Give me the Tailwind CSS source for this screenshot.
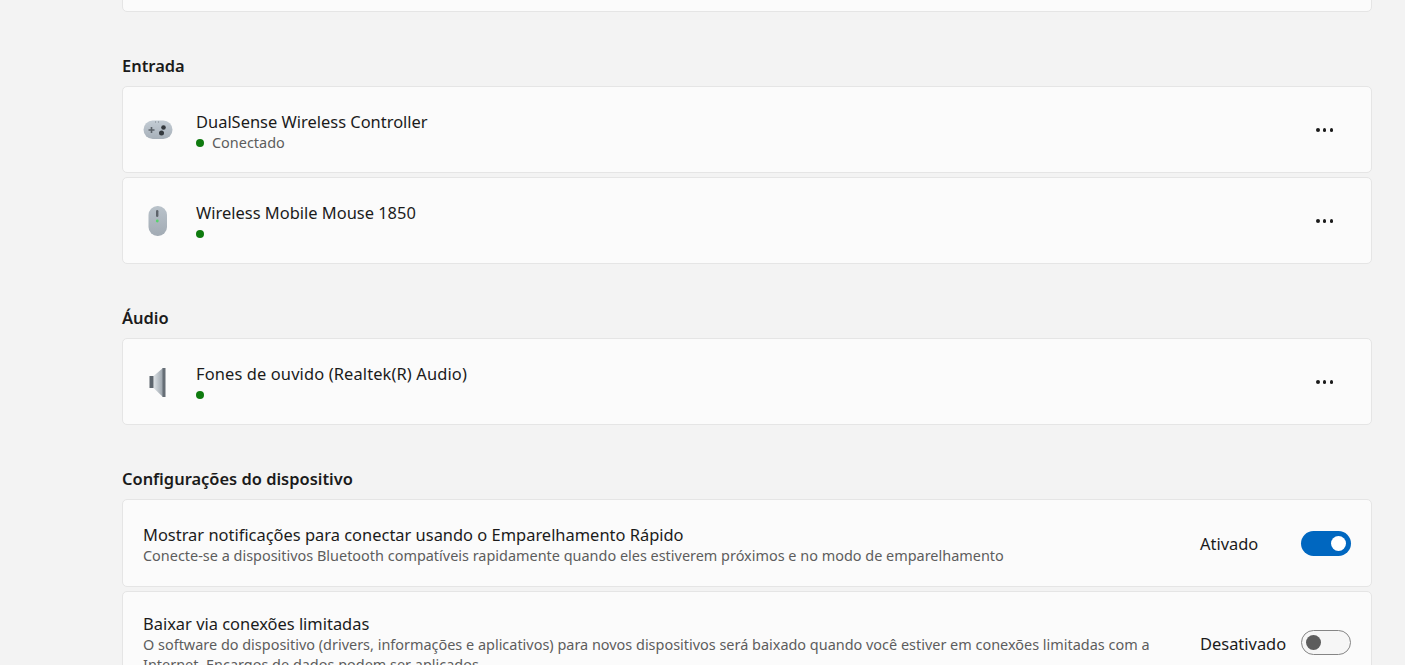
<!DOCTYPE html>
<html lang="en">
<head>
  <meta charset="UTF-8" />
  <title>Bluetooth e dispositivos</title>
  <script src="https://cdn.jsdelivr.net/npm/@tailwindcss/browser@4"></script>
</head>
<body class="bg-[#f3f3f3] h-[665px] overflow-hidden font-['Noto_Sans',sans-serif] text-[#1b1b1b]">
  <main class="w-[1250px] ml-[122px] -mt-[75px]">

    <div class="h-[87px] bg-[#fbfbfb] border border-[#e5e5e5] rounded-[5px]"></div>

    <!-- Entrada -->
    <h2 class="mt-[42px] h-[24px] text-[16.45px] leading-[24px] font-semibold">Entrada</h2>
    <div class="mt-[8px] flex flex-col gap-[4px]">
      <div class="h-[87px] bg-[#fbfbfb] border border-[#e5e5e5] rounded-[5px] flex items-center">
        <div class="w-[69px] flex justify-center">
          <svg width="30" height="20" viewBox="0 0 30 20">
            <defs><linearGradient id="pad" x1="0" y1="0" x2="0" y2="1"><stop offset="0" stop-color="#c3ccd4"/><stop offset="1" stop-color="#a7b0b9"/></linearGradient></defs>
            <rect x="0.5" y="0.5" width="29" height="18.5" rx="9.2" fill="url(#pad)"/>
            <path d="M5.5 10h6M8.5 7v6" stroke="#5b6168" stroke-width="1.6"/>
            <circle cx="20.5" cy="7.5" r="2.3" fill="#33383d"/>
            <circle cx="18.5" cy="13" r="2.5" fill="#33383d"/>
            <path d="M12 2h1M15 2h1" stroke="#7d858c" stroke-width="1"/>
          </svg>
        </div>
        <div class="flex-1 pl-[4px] pt-[4px]">
          <p class="text-[16.45px] leading-[22px]">DualSense Wireless Controller</p>
          <p class="flex items-center text-[14.45px] leading-[20px] text-[#5d5d5d]"><span class="w-[8px] h-[8px] rounded-full bg-[#0f7b0f] mr-[8px]"></span>Conectado</p>
        </div>
        <span class="w-[17px] mr-[38px] mt-[1px] flex justify-between"><i class="w-[3.5px] h-[3.5px] rounded-full bg-[#1b1b1b]"></i><i class="w-[3.5px] h-[3.5px] rounded-full bg-[#1b1b1b]"></i><i class="w-[3.5px] h-[3.5px] rounded-full bg-[#1b1b1b]"></i></span>
      </div>
      <div class="h-[87px] bg-[#fbfbfb] border border-[#e5e5e5] rounded-[5px] flex items-center">
        <div class="w-[69px] flex justify-center">
          <svg width="20" height="30" viewBox="0 0 20 30">
            <defs><linearGradient id="mouse" x1="0" y1="0" x2="0" y2="1"><stop offset="0" stop-color="#b9c2ca"/><stop offset="1" stop-color="#a2abb4"/></linearGradient></defs>
            <rect x="0.5" y="0" width="18.5" height="30" rx="9" fill="url(#mouse)"/>
            <rect x="8" y="4" width="2.4" height="7" rx="1.2" fill="#5d636a"/>
            <circle cx="9.3" cy="15" r="1.4" fill="#55d46a"/>
          </svg>
        </div>
        <div class="flex-1 pl-[4px] pt-[3px]">
          <p class="text-[16.45px] leading-[22px] pt-[1px]">Wireless Mobile Mouse 1850</p>
          <p class="flex items-center h-[19px]"><span class="w-[8px] h-[8px] rounded-full bg-[#0f7b0f]"></span></p>
        </div>
        <span class="w-[17px] mr-[38px] mt-[1px] flex justify-between"><i class="w-[3.5px] h-[3.5px] rounded-full bg-[#1b1b1b]"></i><i class="w-[3.5px] h-[3.5px] rounded-full bg-[#1b1b1b]"></i><i class="w-[3.5px] h-[3.5px] rounded-full bg-[#1b1b1b]"></i></span>
      </div>
    </div>

    <!-- Audio -->
    <h2 class="mt-[42px] h-[24px] text-[16.45px] leading-[24px] font-semibold">Áudio</h2>
    <div class="mt-[8px] h-[87px] bg-[#fbfbfb] border border-[#e5e5e5] rounded-[5px] flex items-center">
      <div class="w-[69px] flex justify-center">
        <svg width="20" height="32" viewBox="0 0 20 32">
          <defs><linearGradient id="spk" x1="0" y1="0" x2="1" y2="0"><stop offset="0" stop-color="#dfe4e8"/><stop offset="1" stop-color="#98a1a9"/></linearGradient></defs>
          <path d="M5.5 10L15 2v29l-9.500-9z" fill="url(#spk)"/>
          <rect x="1.500" y="10" width="4" height="12" fill="#5e666e"/>
          <rect x="14.500" y="2" width="3" height="29" fill="#666e76"/>
        </svg>
      </div>
      <div class="flex-1 pl-[4px] pt-[3px]">
        <p class="text-[16.45px] leading-[22px] pt-[1px] tracking-[0.12px]">Fones de ouvido (Realtek(R) Audio)</p>
        <p class="flex items-center h-[19px]"><span class="w-[8px] h-[8px] rounded-full bg-[#0f7b0f]"></span></p>
      </div>
      <span class="w-[17px] mr-[38px] mt-[1px] flex justify-between"><i class="w-[3.5px] h-[3.5px] rounded-full bg-[#1b1b1b]"></i><i class="w-[3.5px] h-[3.5px] rounded-full bg-[#1b1b1b]"></i><i class="w-[3.5px] h-[3.5px] rounded-full bg-[#1b1b1b]"></i></span>
    </div>

    <!-- Configuracoes -->
    <h2 class="mt-[42px] h-[24px] text-[16.45px] leading-[24px] font-semibold">Configurações do dispositivo</h2>
    <div class="mt-[8px] flex flex-col gap-[4px]">
      <div class="h-[88px] bg-[#fbfbfb] border border-[#e5e5e5] rounded-[5px] flex items-center pl-[20px] pr-[20px]">
        <div class="flex-1 pt-[4px]">
          <p class="text-[16.45px] leading-[22px]">Mostrar notificações para conectar usando o Emparelhamento Rápido</p>
          <p class="text-[14.45px] leading-[20px] text-[#5d5d5d]">Conecte-se a dispositivos Bluetooth compatíveis rapidamente quando eles estiverem próximos e no modo de emparelhamento</p>
        </div>
        <span class="w-[101px] text-[16.45px] pt-[3px]">Ativado</span>
        <span class="w-[50px] h-[25px] rounded-full bg-[#0067c0] flex items-center justify-end pr-[5px]"><i class="w-[15px] h-[15px] rounded-full bg-white"></i></span>
      </div>
      <div class="h-[103px] bg-[#fbfbfb] border border-[#e5e5e5] rounded-[5px] flex items-center pl-[20px] pr-[20px]">
        <div class="w-[1057px] pt-[2px]">
          <p class="text-[16.45px] leading-[22px]">Baixar via conexões limitadas</p>
          <p class="max-w-[1030px] text-[14.45px] leading-[20px] text-[#5d5d5d]">O software do dispositivo (drivers, informações e aplicativos) para novos dispositivos será baixado quando você estiver em conexões limitadas com a Internet. Encargos de dados podem ser aplicados</p>
        </div>
        <span class="w-[101px] text-[16.45px] pt-[3px]">Desativado</span>
        <span class="w-[50px] h-[25px] rounded-full bg-[#f6f6f6] border border-[#858585] flex items-center pl-[4px]"><i class="w-[15px] h-[15px] rounded-full bg-[#5d5d5d]"></i></span>
      </div>
    </div>
  </main>
</body>
</html>
